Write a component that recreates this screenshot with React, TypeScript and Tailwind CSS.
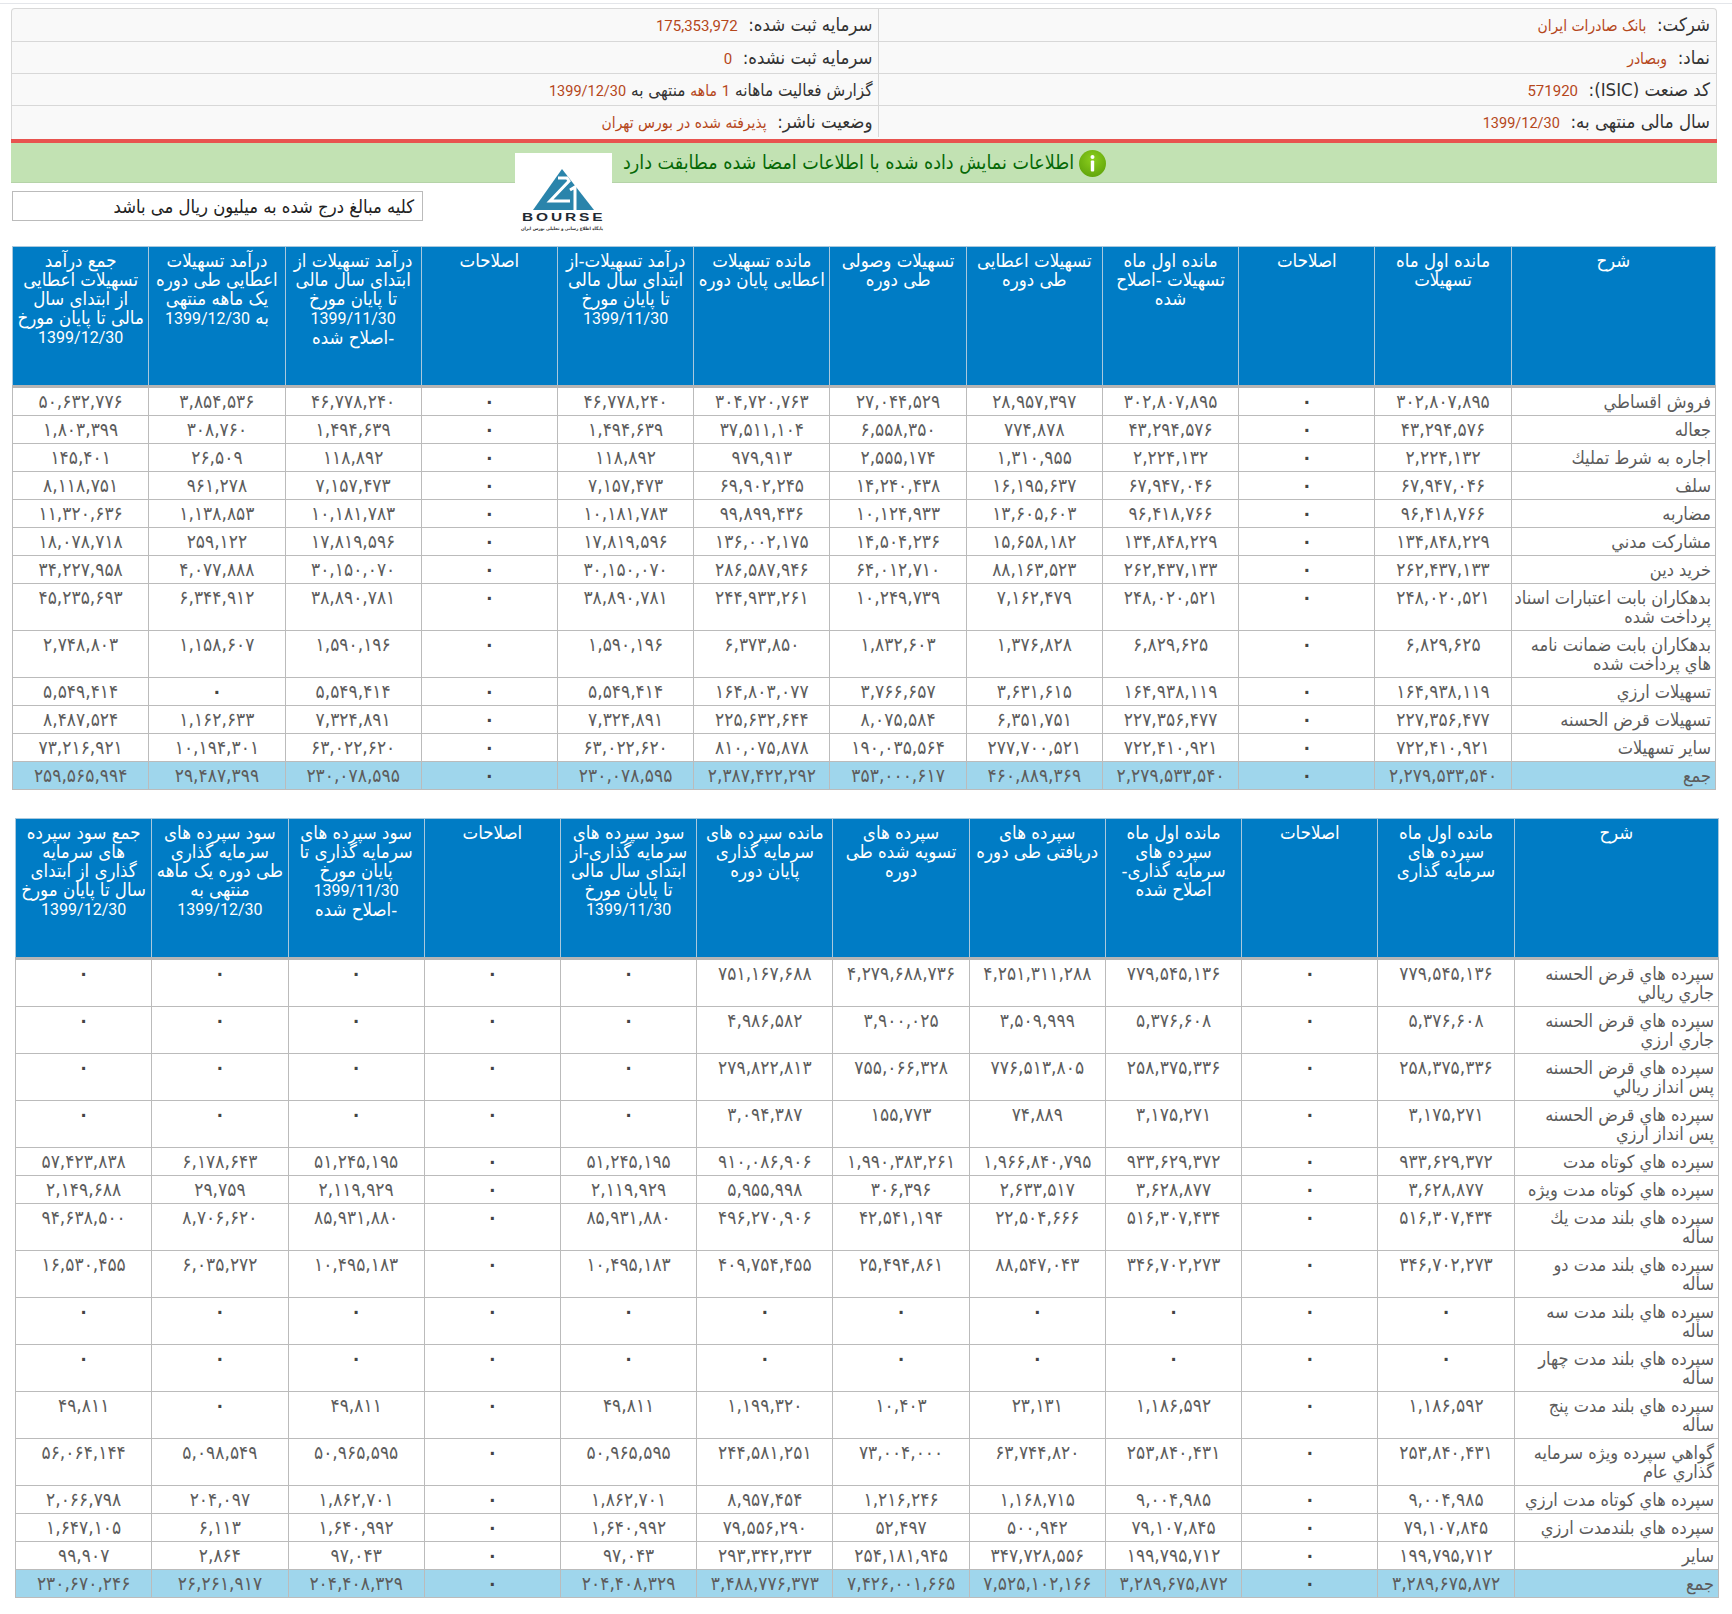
const FONT = 'font-["DejaVu_Sans_Condensed","DejaVu_Sans",sans-serif]';

const faDigits = '۰۱۲۳۴۵۶۷۸۹';
const fa = (value: string) => value.replace(/\d/g, (d) => faDigits[Number(d)]);

type Row = { name: string; cells: string[] };

const row = (name: string, first: string, a: string, b: string, end: string, inc: string, period: string, total: string): Row => ({
  name,
  cells: [first, '0', first, a, b, end, inc, '0', inc, period, total],
});

const LOAN_HEAD = [
  'شرح',
  'مانده اول ماه\nتسهیلات',
  'اصلاحات',
  'مانده اول ماه\nتسهیلات -اصلاح\nشده',
  'تسهیلات اعطایی\nطی دوره',
  'تسهیلات وصولی\nطی دوره',
  'مانده تسهیلات\nاعطایی پایان دوره',
  'درآمد تسهیلات-از\nابتدای سال مالی\nتا پایان مورخ\n1399/11/30',
  'اصلاحات',
  'درآمد تسهیلات از\nابتدای سال مالی\nتا پایان مورخ\n1399/11/30\n-اصلاح شده',
  'درآمد تسهیلات\nاعطایی طی دوره\nیک ماهه منتهی\nبه 1399/12/30',
  'جمع درآمد\nتسهیلات اعطایی\nاز ابتدای سال\nمالی تا پایان مورخ\n1399/12/30',
];

const LOAN_ROWS: Row[] = [
  row('فروش اقساطي', '302,807,895', '28,957,397', '27,044,529', '304,720,763', '46,778,240', '3,854,536', '50,632,776'),
  row('جعاله', '43,294,576', '774,878', '6,558,350', '37,511,104', '1,494,639', '308,760', '1,803,399'),
  row('اجاره به شرط تمليك', '2,224,132', '1,310,955', '2,555,174', '979,913', '118,892', '26,509', '145,401'),
  row('سلف', '67,947,046', '16,195,637', '14,240,438', '69,902,245', '7,157,473', '961,278', '8,118,751'),
  row('مضاربه', '96,418,766', '13,605,603', '10,124,933', '99,899,436', '10,181,783', '1,138,853', '11,320,636'),
  row('مشاركت مدني', '134,848,229', '15,658,182', '14,504,236', '136,002,175', '17,819,596', '259,122', '18,078,718'),
  row('خريد دين', '262,437,133', '88,163,523', '64,012,710', '286,587,946', '30,150,070', '4,077,888', '34,227,958'),
  row('بدهكاران بابت اعتبارات اسناد\nپرداخت شده', '248,020,521', '7,162,479', '10,249,739', '244,933,261', '38,890,781', '6,344,912', '45,235,693'),
  row('بدهكاران بابت ضمانت نامه\nهاي پرداخت شده', '6,829,625', '1,376,828', '1,832,603', '6,373,850', '1,590,196', '1,158,607', '2,748,803'),
  row('تسهيلات ارزي', '164,938,119', '3,631,615', '3,766,657', '164,803,077', '5,549,414', '0', '5,549,414'),
  row('تسهيلات قرض الحسنه', '227,356,477', '6,351,751', '8,075,584', '225,632,644', '7,324,891', '1,162,633', '8,487,524'),
  row('ساير تسهيلات', '722,410,921', '277,700,521', '190,035,564', '810,075,878', '63,022,620', '10,194,301', '73,216,921'),
];
const LOAN_TOTAL = row('جمع', '2,279,533,540', '460,889,369', '353,000,617', '2,387,422,292', '230,078,595', '29,487,399', '259,565,994');

const DEPOSIT_HEAD = [
  'شرح',
  'مانده اول ماه\nسپرده های\nسرمایه گذاری',
  'اصلاحات',
  'مانده اول ماه\nسپرده های\nسرمایه گذاری-\nاصلاح شده',
  'سپرده های\nدریافتی طی دوره',
  'سپرده های\nتسویه شده طی\nدوره',
  'مانده سپرده های\nسرمایه گذاری\nپایان دوره',
  'سود سپرده های\nسرمایه گذاری-از\nابتدای سال مالی\nتا پایان مورخ\n1399/11/30',
  'اصلاحات',
  'سود سپرده های\nسرمایه گذاری تا\nپایان مورخ\n1399/11/30\n-اصلاح شده',
  'سود سپرده های\nسرمایه گذاری\nطی دوره یک ماهه\nمنتهی به\n1399/12/30',
  'جمع سود سپرده\nهای سرمایه\nگذاری از ابتدای\nسال تا پایان مورخ\n1399/12/30',
];

const DEPOSIT_ROWS: Row[] = [
  row('سپرده هاي قرض الحسنه\nجاري ريالي', '779,545,136', '4,251,311,288', '4,279,688,736', '751,167,688', '0', '0', '0'),
  row('سپرده هاي قرض الحسنه\nجاري ارزي', '5,376,608', '3,509,999', '3,900,025', '4,986,582', '0', '0', '0'),
  row('سپرده هاي قرض الحسنه\nپس انداز ريالي', '258,375,336', '776,513,805', '755,066,328', '279,822,813', '0', '0', '0'),
  row('سپرده هاي قرض الحسنه\nپس انداز ارزي', '3,175,271', '74,889', '155,773', '3,094,387', '0', '0', '0'),
  row('سپرده هاي كوتاه مدت', '933,629,372', '1,966,840,795', '1,990,383,261', '910,086,906', '51,245,195', '6,178,643', '57,423,838'),
  row('سپرده هاي كوتاه مدت ويژه', '3,628,877', '2,633,517', '306,396', '5,955,998', '2,119,929', '29,759', '2,149,688'),
  row('سپرده هاي بلند مدت يك\nساله', '516,307,434', '22,504,666', '42,541,194', '496,270,906', '85,931,880', '8,706,620', '94,638,500'),
  row('سپرده هاي بلند مدت دو\nساله', '346,702,273', '88,547,043', '25,494,861', '409,754,455', '10,495,183', '6,035,272', '16,530,455'),
  row('سپرده هاي بلند مدت سه\nساله', '0', '0', '0', '0', '0', '0', '0'),
  row('سپرده هاي بلند مدت چهار\nساله', '0', '0', '0', '0', '0', '0', '0'),
  row('سپرده هاي بلند مدت پنج\nساله', '1,186,592', '23,131', '10,403', '1,199,320', '49,811', '0', '49,811'),
  row('گواهي سپرده ويژه سرمايه\nگذاري عام', '253,840,431', '63,744,820', '73,004,000', '244,581,251', '50,965,595', '5,098,549', '56,064,144'),
  row('سپرده هاي كوتاه مدت ارزي', '9,004,985', '1,168,715', '1,216,246', '8,957,454', '1,862,701', '204,097', '2,066,798'),
  row('سپرده هاي بلندمدت ارزي', '79,107,845', '500,942', '52,497', '79,556,290', '1,640,992', '6,113', '1,647,105'),
  row('ساير', '199,795,712', '347,728,556', '254,181,945', '293,342,323', '97,043', '2,864', '99,907'),
];
const DEPOSIT_TOTAL = row('جمع', '3,289,675,872', '7,525,102,166', '7,426,001,665', '3,488,776,373', '204,408,329', '26,261,917', '230,670,246');

function HeadText({ text }: { text: string }) {
  const parts = text.split(/(\d{4}\/\d{2}\/\d{2})/);
  return (
    <>
      {parts.map((part, i) =>
        i % 2 ? (
          <span key={i} className='font-["Roboto",sans-serif] text-[16px]'>
            {part}
          </span>
        ) : (
          part
        ),
      )}
    </>
  );
}

function DataTable({ head, rows, total }: { head: string[]; rows: Row[]; total: Row }) {
  return (
    <table dir="rtl" className="w-[1704px] table-fixed border-collapse text-[18.5px] leading-[19px] text-[#5c5c5c]">
      <colgroup>
        <col className="w-[12%]" />
        {head.slice(1).map((h, i) => (
          <col key={i} className="w-[8%]" />
        ))}
      </colgroup>
      <thead>
        <tr>
          {head.map((h, i) => (
            <th
              key={i}
              className="h-[140px] whitespace-pre-line border border-[#a9c8dd] border-b-[3px] border-b-[#b5b5b5] bg-[#007cc5] px-0 pt-[4px] text-center align-top font-normal text-white"
            >
              <HeadText text={h} />
            </th>
          ))}
        </tr>
      </thead>
      <tbody>
        {[...rows, total].map((r) => (
          <tr key={r.name} className={r === total ? 'bg-[#9fd6ec]' : ''}>
            <td className="whitespace-pre border border-[#bbb] py-[4px] pl-0 pr-[4px] text-right align-top text-[18px]">{r.name}</td>
            {r.cells.map((c, i) =>
              c === '0' ? (
                <td key={i} className="border border-[#bbb] px-0 py-[4px] text-center align-top font-bold text-[#444]">
                  {fa(c)}
                </td>
              ) : (
                <td key={i} className="whitespace-nowrap border border-[#bbb] px-0 py-[4px] text-center align-top text-[19px] tracking-[1.5px]">
                  {fa(c)}
                </td>
              ),
            )}
          </tr>
        ))}
      </tbody>
    </table>
  );
}

const Val = ({ children }: { children: React.ReactNode }) => <span className="text-[15.5px] text-[#b5471b]">{children}</span>;
const Num = ({ children }: { children: React.ReactNode }) => (
  <span className='font-["Roboto",sans-serif] text-[15px] text-[#b5471b]'>{children}</span>
);
const DateVal = ({ children }: { children: React.ReactNode }) => (
  <span className='font-["Roboto",sans-serif] text-[14.5px] text-[#b5471b]'>{children}</span>
);

const INFO: [React.ReactNode, React.ReactNode][] = [
  [
    <>شرکت:&nbsp; <Val>بانک صادرات ایران</Val></>,
    <>سرمایه ثبت شده:&nbsp; <Num>175,353,972</Num></>,
  ],
  [
    <>نماد:&nbsp; <Val>وبصادر</Val></>,
    <>سرمایه ثبت نشده:&nbsp; <Num>0</Num></>,
  ],
  [
    <>کد صنعت (ISIC):&nbsp; <Num>571920</Num></>,
    <span className="text-[17px]">گزارش فعالیت ماهانه <Num>1</Num> <Val>ماهه</Val> منتهی به <DateVal>1399/12/30</DateVal></span>,
  ],
  [
    <>سال مالی منتهی به:&nbsp; <DateVal>1399/12/30</DateVal></>,
    <>وضعیت ناشر:&nbsp; <Val>پذیرفته شده در بورس تهران</Val></>,
  ],
];

function BourseLogo() {
  return (
    <div className="absolute left-[515px] top-[10px] h-[84px] w-[97px] bg-white">
      <svg viewBox="0 0 97 84" className="h-full w-full">
        <path d="M47 16 L18 57 L79 57 Z" fill="#2a84ab" />
        <path d="M43 25 L52 25 L54 28 L35 48 L55 48" fill="none" stroke="#fff" strokeWidth="3" />
        <path d="M55 37 L60 34 L60 57" fill="none" stroke="#fff" strokeWidth="3" />
        <text
          transform="translate(7 68) scale(1.55 1)"
          textLength="52"
          lengthAdjust="spacing"
          fontSize="10"
          fontWeight="bold"
          fill="#1f2a33"
          fontFamily="Liberation Sans, sans-serif"
        >
          BOURSE
        </text>
        <text x="47" y="77" textAnchor="middle" fontSize="4.5" fontWeight="bold" fill="#333" direction="rtl">
          پایگاه اطلاع رسانی و تحلیلی بورس ایران
        </text>
      </svg>
    </div>
  );
}

export default function App() {
  return (
    <div className={`min-h-[1614px] w-[1732px] bg-white pt-[3px] ${FONT}`}>
      <div className="h-px bg-[#e4e6ea]" />

      <div className="ml-[11px] mt-[4px] w-[1706px] overflow-hidden rounded-t-[4px] border border-b-0 border-[#d8d8d8] bg-[#f9f9f9] pb-[2px]">
        <table dir="rtl" className="w-full table-fixed border-collapse text-[18.5px] leading-[19px] text-[#333]">
          <tbody>
            {INFO.map(([right, left], i) => (
              <tr key={i} className="h-[32px]">
                <td className="w-[838px] border-l border-t border-[#d8d8d8] pr-[6px] pt-[2px] text-right [tr:first-child>&]:border-t-0">{right}</td>
                <td className="border-t border-[#d8d8d8] pr-[5px] pt-[2px] text-right [tr:first-child>&]:border-t-0">{left}</td>
              </tr>
            ))}
          </tbody>
        </table>
      </div>

      <div className="ml-[11px] h-[4px] w-[1706px] bg-[#e8534f]" />

      <div className="relative">
        <div className="ml-[11px] flex h-[40px] w-[1706px] items-center gap-[5px] border-b border-[#b5d3a8] bg-[#c2e2b3] pl-[612px] pt-[1px]" dir="ltr">
          <span className="text-[19.5px] text-[#066806]" dir="rtl">اطلاعات نمایش داده شده با اطلاعات امضا شده مطابقت دارد</span>
          <svg viewBox="0 0 27 27" className="h-[27px] w-[27px] shrink-0">
            <defs>
              <radialGradient id="infoGreen" cx="50%" cy="35%" r="70%">
                <stop offset="0%" stopColor="#8ccf1e" />
                <stop offset="100%" stopColor="#5fa30a" />
              </radialGradient>
            </defs>
            <circle cx="13.5" cy="13.5" r="13.5" fill="url(#infoGreen)" />
            <circle cx="13.5" cy="7" r="2" fill="#fff" />
            <rect x="11.8" y="10.5" width="3.4" height="11" rx="1" fill="#fff" />
          </svg>
        </div>

        <div className="ml-[12px] mt-[8px] flex h-[30px] w-[411px] items-center border border-[#bbb] bg-white pr-[8px] pt-[1px] text-[18.3px] text-[#222]" dir="rtl">
          کلیه مبالغ درج شده به میلیون ریال می باشد
        </div>
        <BourseLogo />
      </div>

      <div className="ml-[12px] mt-[25px]">
        <DataTable head={LOAN_HEAD} rows={LOAN_ROWS} total={LOAN_TOTAL} />
      </div>
      <div className="ml-[15px] mt-[28px]">
        <DataTable head={DEPOSIT_HEAD} rows={DEPOSIT_ROWS} total={DEPOSIT_TOTAL} />
      </div>
    </div>
  );
}
